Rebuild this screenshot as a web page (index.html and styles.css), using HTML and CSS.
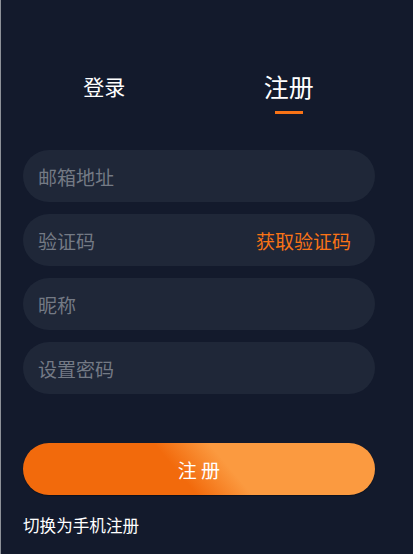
FILE: index.html
```html
<!DOCTYPE html>
<html lang="zh-CN">
<head>
  <meta charset="UTF-8">
  <title>注册</title>
  <link rel="stylesheet" href="styles.css">
</head>
<body>
  <div class="page">

    <div class="tabs">
      <div class="tab">登录</div>
      <div class="tab active">注册</div>
    </div>

    <form class="form">
      <div class="field">
        <input type="text" placeholder="邮箱地址">
      </div>
      <div class="field">
        <input type="text" placeholder="验证码">
        <a class="get-code">获取验证码</a>
      </div>
      <div class="field">
        <input type="text" placeholder="昵称">
      </div>
      <div class="field">
        <input type="password" placeholder="设置密码">
      </div>

      <button type="button" class="submit">注 册</button>
    </form>

    <div class="switch">切换为手机注册</div>
  </div>
</body>
</html>
```

FILE: styles.css
```css
body {
  margin: 0;
  background: #131a2c;
  font-family: "Noto Sans CJK SC", "Noto Sans", sans-serif;
  color: #ffffff;
}

.page {
  min-height: 554px;
  box-sizing: border-box;
  border-left: 1px solid #8d9198;
  padding: 66px 0 0 22px;
  width: 375px;
}

.tabs {
  display: flex;
  align-items: flex-start;
  width: 369px;
  margin-left: -11px;
}

.tab {
  flex: 1;
  text-align: center;
  font-size: 21px;
  line-height: 40px;
}

.tab.active {
  font-size: 25px;
}

.tab.active::after {
  content: "";
  display: block;
  width: 28px;
  height: 3px;
  margin: 5px auto 0;
  background: #f97316;
}

.form {
  margin-top: 36px;
  display: flex;
  flex-direction: column;
  gap: 12px;
}

.field {
  height: 52px;
  border-radius: 26px;
  background: #1f2738;
  display: flex;
  align-items: center;
  padding: 0 24px 0 15px;
}

.field input {
  flex: 1;
  min-width: 0;
  background: transparent;
  border: none;
  outline: none;
  padding: 0;
  font-family: inherit;
  font-size: 19px;
  color: #ffffff;
}

.field input::placeholder {
  color: #747a85;
}

.get-code {
  font-size: 19px;
  color: #f97316;
  cursor: pointer;
}

.submit {
  margin-top: 37px;
  height: 52px;
  border: none;
  border-radius: 26px;
  background: linear-gradient(50deg, #f26a0c 44%, #fb9a40 58%);
  box-shadow: 0 1px 1px rgba(0,0,0,0.35);
  color: #ffffff;
  font-family: inherit;
  font-size: 19px;
  cursor: pointer;
}

.switch {
  margin-top: 18px;
  font-size: 16.6px;
  line-height: 24px;
}
```
